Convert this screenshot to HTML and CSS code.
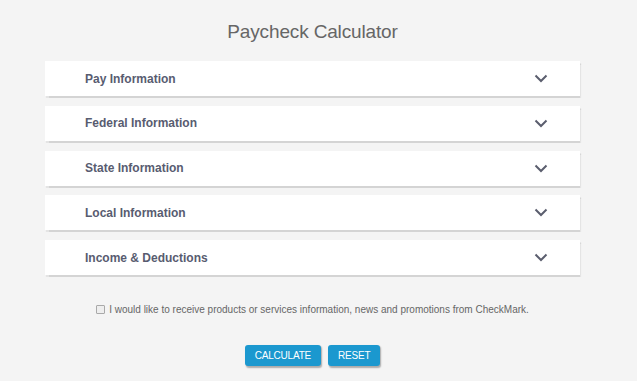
FILE: index.html
```html
<!DOCTYPE html>
<html>
<head>
<meta charset="utf-8">
<link rel="stylesheet" href="styles.css">
</head>
<body>
<div class="page">
  <h1 class="title">Paycheck Calculator</h1>
  <div class="sections">
    <div class="card"><span class="label">Pay Information</span><svg class="chev" width="14" height="9" viewBox="0 0 14 9"><path d="M1.5 1.5 L7 7 L12.5 1.5" fill="none" stroke="#5b5e6e" stroke-width="2"/></svg></div>
    <div class="card"><span class="label">Federal Information</span><svg class="chev" width="14" height="9" viewBox="0 0 14 9"><path d="M1.5 1.5 L7 7 L12.5 1.5" fill="none" stroke="#5b5e6e" stroke-width="2"/></svg></div>
    <div class="card"><span class="label">State Information</span><svg class="chev" width="14" height="9" viewBox="0 0 14 9"><path d="M1.5 1.5 L7 7 L12.5 1.5" fill="none" stroke="#5b5e6e" stroke-width="2"/></svg></div>
    <div class="card"><span class="label">Local Information</span><svg class="chev" width="14" height="9" viewBox="0 0 14 9"><path d="M1.5 1.5 L7 7 L12.5 1.5" fill="none" stroke="#5b5e6e" stroke-width="2"/></svg></div>
    <div class="card"><span class="label">Income &amp; Deductions</span><svg class="chev" width="14" height="9" viewBox="0 0 14 9"><path d="M1.5 1.5 L7 7 L12.5 1.5" fill="none" stroke="#5b5e6e" stroke-width="2"/></svg></div>
  </div>
  <label class="consent"><span class="box"></span>I would like to receive products or services information, news and promotions from CheckMark.</label>
  <div class="actions">
    <button class="btn">CALCULATE</button>
    <button class="btn">RESET</button>
  </div>
</div>
</body>
</html>
```
FILE: styles.css
```css
html, body {
  margin: 0;
  padding: 0;
  background: #f4f4f4;
  font-family: "Liberation Sans", Arial, sans-serif;
}
.page {
  width: 637px;
  height: 381px;
  display: flex;
  flex-direction: column;
  align-items: center;
  overflow: hidden;
}
.title {
  margin: 20px 0 0 -12px;
  font-size: 19px;
  font-weight: normal;
  color: #666666;
  line-height: 24px;
  height: 24px;
  letter-spacing: -0.15px;
}
.sections {
  margin-top: 17px;
  margin-left: -12px;
  width: 535px;
  display: flex;
  flex-direction: column;
  gap: 9.75px;
}
.card {
  height: 35px;
  background: #ffffff;
  box-shadow: 1px 1.5px 1px rgba(0,0,0,0.13);
  display: flex;
  align-items: center;
  justify-content: space-between;
  padding: 0 32px 0 40px;
}
.label {
  font-size: 12px;
  font-weight: bold;
  color: #585c70;
}
.chev {
  display: block;
}
.consent {
  margin-top: 29px;
  margin-left: -12px;
  font-size: 10px;
  color: #666666;
  display: flex;
  align-items: center;
}
.box {
  width: 7px;
  height: 7px;
  border: 1px solid #a9a9a9;
  border-radius: 1px;
  background: #eeeeee;
  margin-right: 4px;
}
.actions {
  margin-top: 30px;
  margin-left: -12px;
  display: flex;
  gap: 7px;
}
.btn {
  height: 21px;
  border: none;
  border-radius: 3px;
  background: #1b98cf;
  color: #ffffff;
  font-family: "Liberation Sans", Arial, sans-serif;
  font-size: 10px;
  padding: 0 10px;
  box-shadow: 1px 1.5px 1.5px rgba(0,0,0,0.3);
  letter-spacing: -0.2px;
}
```
